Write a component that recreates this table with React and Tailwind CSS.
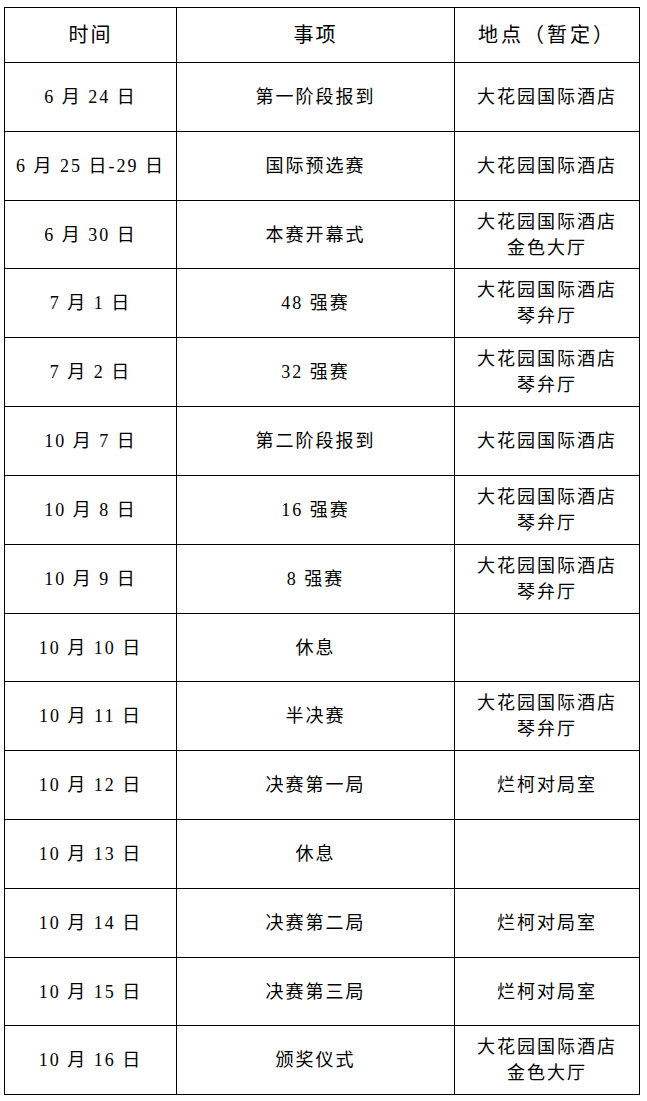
const rows = [
  { h: "h-[69px]", date: "6 月 24 日", item: "第一阶段报到", place: ["大花园国际酒店"] },
  { h: "h-[69px]", date: "6 月 25 日-29 日", item: "国际预选赛", place: ["大花园国际酒店"] },
  { h: "h-[68px]", date: "6 月 30 日", item: "本赛开幕式", place: ["大花园国际酒店", "金色大厅"] },
  { h: "h-[69px]", date: "7 月 1 日", item: "48 强赛", place: ["大花园国际酒店", "琴弁厅"] },
  { h: "h-[69px]", date: "7 月 2 日", item: "32 强赛", place: ["大花园国际酒店", "琴弁厅"] },
  { h: "h-[69px]", date: "10 月 7 日", item: "第二阶段报到", place: ["大花园国际酒店"] },
  { h: "h-[69px]", date: "10 月 8 日", item: "16 强赛", place: ["大花园国际酒店", "琴弁厅"] },
  { h: "h-[69px]", date: "10 月 9 日", item: "8 强赛", place: ["大花园国际酒店", "琴弁厅"] },
  { h: "h-[68px]", date: "10 月 10 日", item: "休息", place: [] },
  { h: "h-[69px]", date: "10 月 11 日", item: "半决赛", place: ["大花园国际酒店", "琴弁厅"] },
  { h: "h-[69px]", date: "10 月 12 日", item: "决赛第一局", place: ["烂柯对局室"] },
  { h: "h-[69px]", date: "10 月 13 日", item: "休息", place: [] },
  { h: "h-[69px]", date: "10 月 14 日", item: "决赛第二局", place: ["烂柯对局室"] },
  { h: "h-[68px]", date: "10 月 15 日", item: "决赛第三局", place: ["烂柯对局室"] },
  { h: "h-[69px]", date: "10 月 16 日", item: "颁奖仪式", place: ["大花园国际酒店", "金色大厅"] },
];

const cell = "flex flex-col items-center justify-center text-center border-r border-b border-black";

export default function App() {
  return (
    <div
      lang="zh-CN"
      className="min-h-screen bg-white text-black text-[18px] leading-[26px] tracking-[2px] pt-[7px] pl-[4px] [text-spacing-trim:space-all]"
      style={{ fontFamily: '"Liberation Serif", "Noto Sans CJK SC", serif' }}
    >
      <div className="w-[636px] border-l border-t border-black grid grid-cols-[172px_278px_185px]">
        {/* header */}
        <div className={`${cell} h-[55px] text-[20px]`}>时间</div>
        <div className={`${cell} h-[55px] text-[20px]`}>事项</div>
        <div className={`${cell} h-[55px] text-[20px] tracking-[3px]`}>地点（暂定）</div>

        {rows.map((r, i) => (
          <div key={i} className="contents">
            <div className={`${cell} ${r.h}`}>{r.date}</div>
            <div className={`${cell} ${r.h}`}>{r.item}</div>
            <div className={`${cell} ${r.h}`}>
              {r.place.map((p, j) => (
                <span key={j}>{p}</span>
              ))}
            </div>
          </div>
        ))}
      </div>
    </div>
  );
}
